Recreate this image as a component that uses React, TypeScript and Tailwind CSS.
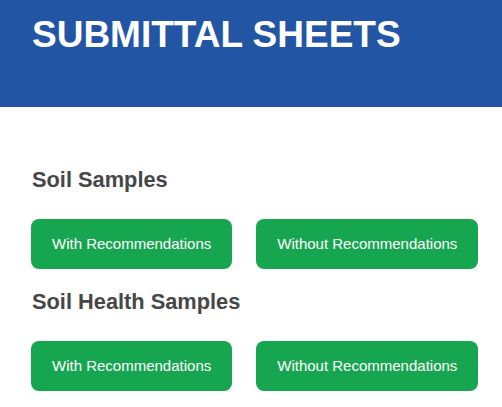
export default function App() {
  const sections = ["Soil Samples", "Soil Health Samples"];

  return (
    <div className="min-h-screen bg-white font-['Liberation_Sans',Arial,sans-serif]">
      <header className="h-[107px] bg-[#2256a5] px-[32px] pt-[14px]">
        <h1 className="text-[37px] leading-[42px] font-bold whitespace-nowrap text-white">SUBMITTAL SHEETS</h1>
      </header>

      <main className="px-[31px] pt-[60px]">
        {sections.map((title, i) => (
          <section key={title} className={i === 0 ? "" : "mt-[20px]"}>
            <h2 className="pl-px text-[21.8px] leading-[25px] font-bold text-[#474747]">{title}</h2>
            <div className="mt-[27px] flex gap-[24px]">
              <button className="flex h-[50px] shrink-0 items-center rounded-[8px] bg-[#17a650] px-[21px] text-[15px] whitespace-nowrap text-white">
                With Recommendations
              </button>
              <button className="flex h-[50px] shrink-0 items-center rounded-[8px] bg-[#17a650] px-[21px] text-[15px] whitespace-nowrap text-white">
                Without Recommendations
              </button>
            </div>
          </section>
        ))}
      </main>
    </div>
  );
}
